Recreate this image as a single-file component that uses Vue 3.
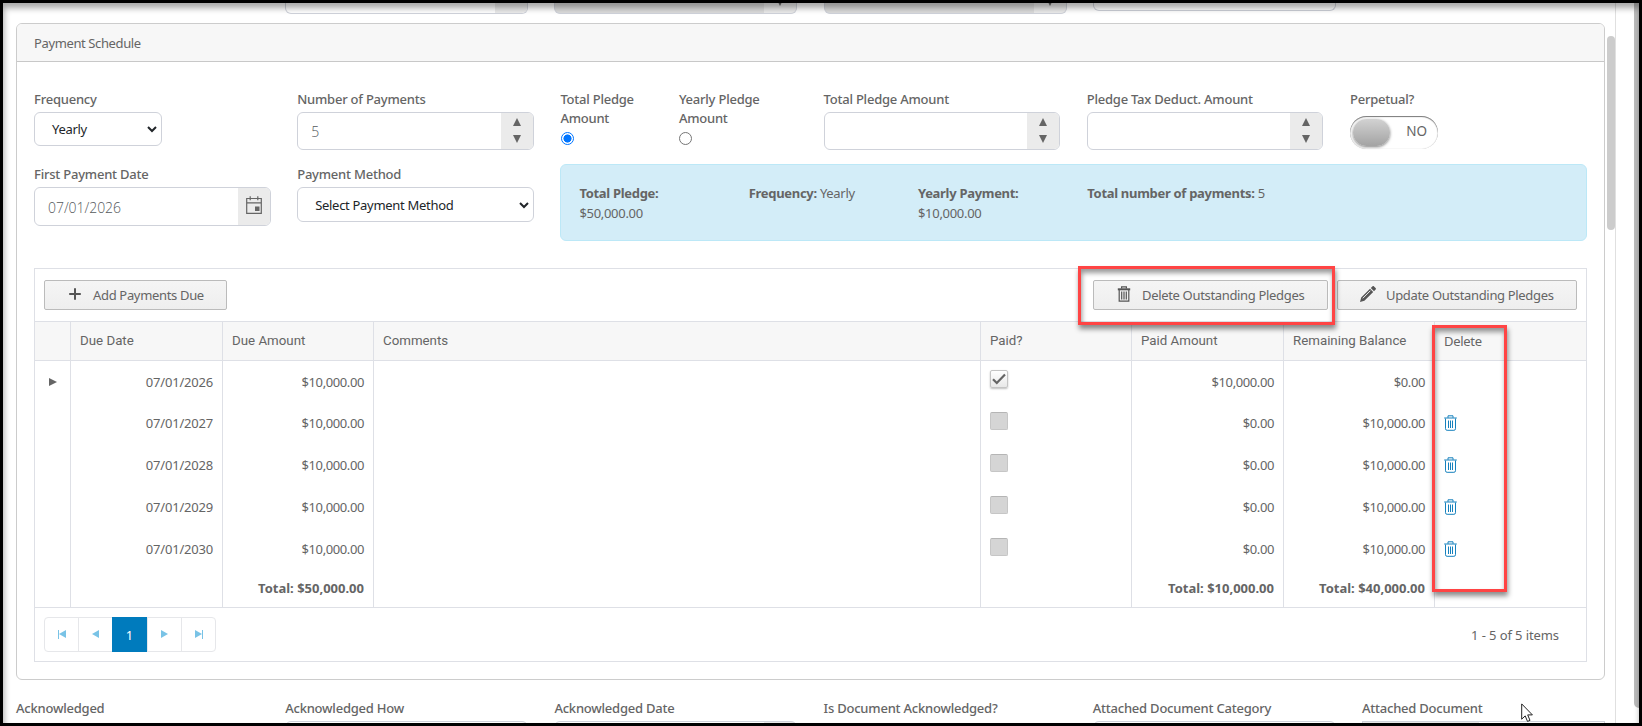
<template>
    <div class="screen">
        <div class="page">
            <div class="field-strip top-strip">
                <div class="strip-col"></div>
                <div class="strip-col"><div class="cut-input"><span class="cut-button"></span></div></div>
                <div class="strip-col"><div class="cut-input disabled"><span class="cut-button"><i class="arrow down"></i></span></div></div>
                <div class="strip-col"><div class="cut-input disabled"><span class="cut-button"><i class="arrow down"></i></span></div></div>
                <div class="strip-col"><div class="cut-input short"></div></div>
                <div class="strip-col"></div>
            </div>

            <section class="card">
                <header class="card-header">Payment Schedule</header>
                <div class="card-body">
                    <div class="form-grid">
                        <div class="field">
                            <label>Frequency</label>
                            <div class="select small">
                                <span>{{ frequency }}</span>
                                <svg class="chevron" viewBox="0 0 10 7"><path d="M1 1l4 4 4-4" /></svg>
                            </div>
                        </div>
                        <div class="field">
                            <label>Number of Payments</label>
                            <div class="numeric">
                                <span class="value">{{ payments.length }}</span>
                                <span class="spinner"><i class="arrow up"></i><i class="arrow down"></i></span>
                            </div>
                        </div>
                        <div class="field radios">
                            <div class="radio-item total">
                                <label>Total Pledge Amount</label>
                                <span class="radio checked"></span>
                            </div>
                            <div class="radio-item">
                                <label>Yearly Pledge Amount</label>
                                <span class="radio"></span>
                            </div>
                        </div>
                        <div class="field">
                            <label>Total Pledge Amount</label>
                            <div class="numeric amount">
                                <span class="value"></span>
                                <span class="spinner"><i class="arrow up"></i><i class="arrow down"></i></span>
                            </div>
                        </div>
                        <div class="field">
                            <label>Pledge Tax Deduct. Amount</label>
                            <div class="numeric amount">
                                <span class="value"></span>
                                <span class="spinner"><i class="arrow up"></i><i class="arrow down"></i></span>
                            </div>
                        </div>
                        <div class="field">
                            <label>Perpetual?</label>
                            <div class="switch"><span class="knob"></span><span class="switch-text">NO</span></div>
                        </div>

                        <div class="field">
                            <label>First Payment Date</label>
                            <div class="numeric date">
                                <span class="value">07/01/2026</span>
                                <span class="spinner">
                                    <svg class="calendar" viewBox="0 0 16 18">
                                        <path d="M.7 2.5h14.6v14.8H.7zM.7 6.8h14.6M4.2.3v4M11.8.3v4" />
                                        <rect x="9" y="10.5" width="4.5" height="4.5" />
                                    </svg>
                                </span>
                            </div>
                        </div>
                        <div class="field">
                            <label>Payment Method</label>
                            <div class="select">
                                <span>Select Payment Method</span>
                                <svg class="chevron" viewBox="0 0 10 7"><path d="M1 1l4 4 4-4" /></svg>
                            </div>
                        </div>
                        <div class="summary">
                            <div v-for="item in summary" :key="item.label" :class="{ wide: item.wide }">
                                <b>{{ item.label }}</b> {{ item.value }}
                            </div>
                        </div>
                    </div>

                    <div class="grid">
                        <div class="toolbar">
                            <button class="btn add">
                                <svg viewBox="0 0 16 16"><path d="M8 2.2v11.6M2.2 8h11.6" stroke-width="2" /></svg>
                                <span>Add Payments Due</span>
                            </button>
                            <button class="btn delete">
                                <svg viewBox="0 0 16 16">
                                    <path d="M1.8 3.3h12.4" stroke-width="2" />
                                    <path d="M5.6 2.4V.8h4.8v1.6M3.2 4v11.2h9.6V4M5.7 5.5v8M8 5.5v8M10.3 5.5v8" stroke-width="1.2" />
                                </svg>
                                <span>Delete Outstanding Pledges</span>
                            </button>
                            <button class="btn update">
                                <svg viewBox="0 0 16 16">
                                    <path class="solid" d="M0 16l1.2-4.4L10 2.8l3.2 3.2-8.8 8.8zM10.8 2L12.4.4c.5-.5 1.1-.5 1.6 0L15.6 2c.5.5.5 1.1 0 1.6L14 5.2z" />
                                    <path class="light" d="M2.8 12.3L10.4 4.7" />
                                </svg>
                                <span>Update Outstanding Pledges</span>
                            </button>
                        </div>
                        <table>
                            <colgroup>
                                <col class="c-expand"><col class="c-date"><col class="c-std"><col>
                                <col class="c-std"><col class="c-date"><col class="c-std"><col class="c-last">
                            </colgroup>
                            <thead>
                                <tr>
                                    <th></th>
                                    <th v-for="column in columns" :key="column" :class="{ lower: column === 'Delete' }">{{ column }}</th>
                                </tr>
                            </thead>
                            <tbody>
                                <tr v-for="payment in payments" :key="payment.date">
                                    <td class="expand"><i v-if="payment.paid" class="arrow right"></i></td>
                                    <td class="num date-cell">{{ payment.date }}</td>
                                    <td class="num">{{ payment.amount }}</td>
                                    <td></td>
                                    <td>
                                        <span class="check" :class="{ on: payment.paid }">
                                            <svg v-if="payment.paid" viewBox="0 0 14 14"><path d="M1 7.2L4.8 11 13 2.5" /></svg>
                                        </span>
                                    </td>
                                    <td class="num">{{ payment.paidAmount }}</td>
                                    <td class="num">{{ payment.balance }}</td>
                                    <td>
                                        <svg v-if="!payment.paid" class="trash" viewBox="0 0 13 16">
                                            <path d="M.2 3h12.6M4 2.8V.8h5v2M1.5 3.5v10.2q0 1.6 1.6 1.6h6.800q1.6 0 1.6-1.6V3.5M4.500 5.500v7.500M6.500 5.500v7.500M8.500 5.500v7.500" />
                                        </svg>
                                    </td>
                                </tr>
                            </tbody>
                            <tfoot>
                                <tr>
                                    <td></td>
                                    <td></td>
                                    <td class="num">Total: $50,000.00</td>
                                    <td></td>
                                    <td></td>
                                    <td class="num">Total: $10,000.00</td>
                                    <td class="num">Total: $40,000.00</td>
                                    <td></td>
                                </tr>
                            </tfoot>
                        </table>
                        <div class="pager">
                            <div class="pages">
                                <span class="page-link narrow"><i class="bar"></i><i class="arrow left"></i></span>
                                <span class="page-link"><i class="arrow left"></i></span>
                                <span class="page-link active">1</span>
                                <span class="page-link"><i class="arrow right"></i></span>
                                <span class="page-link"><i class="arrow right"></i><i class="bar"></i></span>
                            </div>
                            <span class="pager-info">1 - 5 of 5 items</span>
                        </div>
                    </div>
                </div>
            </section>

            <div class="field-strip bottom-strip">
                <div v-for="(name, index) in bottomFields" :key="name" class="strip-col">
                    <label>{{ name }}</label>
                    <div v-if="index !== 0 && index !== 3" class="cut-top" :class="{ picker: index === 2, file: index === 5 }"></div>
                </div>
            </div>
        </div>

        <div class="inner-thumb"></div>
        <div class="outer-thumb"></div>
        <div class="marker marker-button"></div>
        <div class="marker marker-column"></div>
        <svg class="cursor" viewBox="0 0 12 20">
            <path d="M.7.9v15.3l3.500-3.300 2.300 5.500 2.500-1-2.300-5.500h4.700z" />
        </svg>
        <div class="frame"></div>
    </div>
</template>

<script setup>
import { ref } from 'vue';

const frequency = ref('Yearly');

const summary = [
    { label: 'Total Pledge:', value: '$50,000.00' },
    { label: 'Frequency:', value: 'Yearly' },
    { label: 'Yearly Payment:', value: '$10,000.00' },
    { label: 'Total number of payments:', value: '5', wide: true }
];

const columns = ['Due Date', 'Due Amount', 'Comments', 'Paid?', 'Paid Amount', 'Remaining Balance', 'Delete'];

const payments = ref([
    { date: '07/01/2026', amount: '$10,000.00', paid: true, paidAmount: '$10,000.00', balance: '$0.00' },
    { date: '07/01/2027', amount: '$10,000.00', paid: false, paidAmount: '$0.00', balance: '$10,000.00' },
    { date: '07/01/2028', amount: '$10,000.00', paid: false, paidAmount: '$0.00', balance: '$10,000.00' },
    { date: '07/01/2029', amount: '$10,000.00', paid: false, paidAmount: '$0.00', balance: '$10,000.00' },
    { date: '07/01/2030', amount: '$10,000.00', paid: false, paidAmount: '$0.00', balance: '$10,000.00' }
]);

const bottomFields = [
    'Acknowledged',
    'Acknowledged How',
    'Acknowledged Date',
    'Is Document Acknowledged?',
    'Attached Document Category',
    'Attached Document'
];
</script>

<style>
body {
    overflow: hidden;
}
</style>

<style scoped>
* {
    box-sizing: border-box;
}

.screen {
    position: relative;
    width: 1642px;
    height: 726px;
    overflow: hidden;
    background: #fff;
    color: #656565;
    font-family: "Noto Sans", "Open Sans", sans-serif;
    font-size: 13px;
    line-height: 19px;
}

.page {
    width: 1616px;
    height: 726px;
    padding-left: 16px;
    border-right: 1px solid #e0e0e0;
}

label {
    display: block;
    font-weight: 500;
    letter-spacing: -0.22px;
    white-space: nowrap;
}

.field-strip {
    display: grid;
    grid-template-columns: repeat(6, 269.2px);
}

.top-strip {
    height: 23px;
}

.cut-input {
    display: flex;
    justify-content: flex-end;
    width: 243px;
    height: 14px;
    border: 1px solid #cfd2da;
    border-top: 0;
    border-radius: 0 0 6px 6px;
    overflow: hidden;
}

.cut-input.disabled {
    background: #dcdcdc;
}

.cut-input.short {
    height: 11px;
}

.cut-button {
    display: flex;
    justify-content: center;
    width: 32px;
    background: #ebebeb;
}

.cut-button .arrow {
    margin-top: -2px;
}

.arrow {
    display: block;
    width: 0;
    height: 0;
    border: 4.5px solid transparent;
}

.arrow.up {
    border-top: 0;
    border-bottom: 8px solid #656565;
}

.arrow.down {
    border-bottom: 0;
    border-top: 8px solid #656565;
}

.arrow.left {
    border-left: 0;
    border-right: 8px solid #79c3e6;
}

.arrow.right {
    border-right: 0;
    border-left: 8px solid #656565;
}

.card {
    width: 1589px;
    height: 657px;
    border: 1px solid #ccc;
    border-radius: 6px;
    overflow: hidden;
}

.card-header {
    height: 38px;
    padding: 10px 17px;
    background: #f7f7f7;
    border-bottom: 1px solid #c8c8c8;
    letter-spacing: -0.38px;
}

.card-body {
    padding: 28px 17px 0;
}

.form-grid {
    display: grid;
    grid-template-columns: repeat(5, 263.2px) 1fr;
    grid-template-rows: 75px 78px;
}

.field {
    width: 237px;
}

.field label {
    margin-bottom: 3px;
}

.select,
.numeric {
    display: flex;
    align-items: center;
    justify-content: space-between;
    border: 1px solid #cfd2da;
    border-radius: 6px;
    background: #fff;
    overflow: hidden;
}

.select {
    height: 35px;
    padding: 1px 4px 0 17px;
    color: #212529;
    letter-spacing: -0.3px;
}

.select.small {
    width: 128px;
    height: 34px;
}

.chevron {
    width: 10px;
    height: 7px;
    fill: none;
    stroke: #212529;
    stroke-width: 2;
}

.numeric {
    height: 38px;
    color: #55595c;
    font-family: "Open Sans", "Noto Sans", sans-serif;
    font-size: 14px;
    font-weight: 300;
}

.numeric.amount {
    width: 236px;
}

.numeric.date {
    height: 39px;
}

.numeric .value {
    padding: 1px 0 0 13px;
    letter-spacing: -0.05px;
}

.spinner {
    display: flex;
    flex-direction: column;
    align-items: center;
    justify-content: center;
    gap: 9px;
    width: 32px;
    height: 100%;
    padding-bottom: 1px;
    background: #ebebeb;
}

.calendar {
    width: 16px;
    height: 18px;
    margin-top: -2px;
    fill: none;
    stroke: #656565;
    stroke-width: 1.2;
}

.calendar rect {
    fill: #656565;
    stroke: none;
}

.radios {
    display: flex;
}

.radio-item {
    width: 90px;
}

.radio-item.total {
    width: 118.5px;
    padding-right: 30px;
}

.radio-item label {
    margin-bottom: 4px;
    white-space: normal;
}

.radio {
    display: block;
    width: 13px;
    height: 13px;
    margin-left: 0.5px;
    border: 1px solid #767676;
    border-radius: 50%;
}

.radio.checked {
    border-color: #0075ff;
    background: radial-gradient(circle, #0075ff 3.8px, #fff 4.3px);
}

.switch {
    display: flex;
    align-items: center;
    justify-content: space-between;
    width: 88px;
    height: 33px;
    margin-top: 7px;
    padding: 0 11px 0 3px;
    border-radius: 17px;
    background: #fff;
    box-shadow: inset 0 1px 1px #777, inset 0 0 1px #bbb;
    font-size: 13.5px;
}

.switch-text {
    margin-top: -3px;
}

.knob {
    width: 37px;
    height: 27px;
    margin-top: -1px;
    border-radius: 14px;
    background: linear-gradient(#d2d2d2, #a3a3a3);
    box-shadow: 0 1px 3px rgba(0, 0, 0, 0.5);
}

.summary {
    grid-column: 3 / -1;
    display: grid;
    grid-template-columns: repeat(3, 169.3px) 1fr;
    height: 77px;
    margin-top: -1px;
    padding: 18px 18px 0;
    border: 1px solid #bce8f7;
    border-radius: 6px;
    background: #d3edf8;
    line-height: 20px;
    letter-spacing: -0.3px;
}

.summary div {
    width: 115px;
}

.summary .wide {
    width: auto;
}

.grid {
    height: 394px;
    margin-top: 25px;
    border: 1px solid #dee0e6;
}

.toolbar {
    display: flex;
    gap: 9px;
    height: 52px;
    padding: 11px 9px;
}

.btn {
    display: flex;
    align-items: center;
    gap: 10px;
    height: 30px;
    padding: 0 0 0 22px;
    border: 1px solid #bbb;
    border-radius: 2px;
    background: linear-gradient(#f5f5f5, #eee);
    color: #656565;
    font: inherit;
    letter-spacing: -0.33px;
    white-space: nowrap;
}

.btn svg {
    width: 16px;
    height: 16px;
    margin-top: -2px;
    fill: none;
    stroke: #555;
}

.btn .solid {
    fill: #555;
    stroke: none;
}

.btn .light {
    stroke: #eee;
    stroke-width: 1;
}

.btn.add {
    width: 183px;
    margin-right: auto;
}

.btn.delete {
    width: 235px;
}

.btn.update {
    width: 240px;
}

table {
    width: 100%;
    border-collapse: separate;
    border-spacing: 0;
    table-layout: fixed;
}

.c-expand {
    width: 35px;
}

.c-date {
    width: 152px;
}

.c-std {
    width: 151px;
}

.c-last {
    width: 152px;
}

th,
td {
    padding: 0 9px;
    border-left: 1px solid #dee0e6;
    text-align: left;
}

th:first-child,
td:first-child {
    border-left: 0;
}

th {
    height: 40px;
    padding-bottom: 2px;
    border-top: 1px solid #dee0e6;
    border-bottom: 1px solid #dee0e6;
    background: #f7f7f7;
    font-family: Roboto, "Liberation Sans", sans-serif;
    font-size: 13.3px;
    font-weight: 400;
}

th.lower {
    padding-top: 1px;
    padding-bottom: 0;
    font-family: "Noto Sans", sans-serif;
    font-size: 13px;
    letter-spacing: -0.3px;
}

tbody td {
    height: 42px;
    padding-top: 1px;
    letter-spacing: -0.4px;
}

tbody tr:first-child td {
    height: 41px;
    padding-top: 2px;
}

tbody td.date-cell {
    letter-spacing: -0.2px;
}

td.num {
    text-align: right;
}

tbody tr:first-child td.expand {
    padding-top: 0;
    padding-left: 14px;
}

tfoot td {
    height: 37px;
    font-weight: 700;
}

.check {
    display: block;
    width: 18px;
    height: 18px;
    margin-top: -5px;
    border: 1px solid #c6c6c6;
    border-top-color: #b5b5b5;
    border-radius: 2px;
    background: #d5d5d5;
}

.check.on {
    margin-top: -7px;
    border-color: #c4c4c4;
    background: linear-gradient(#fff, #e8e8e8);
    box-shadow: 0 1px 2px rgba(0, 0, 0, 0.25);
}

.check svg {
    display: block;
    width: 14px;
    height: 14px;
    margin: 1px;
    fill: none;
    stroke: #656565;
    stroke-width: 2.2;
}

.trash {
    display: block;
    width: 13px;
    height: 16px;
    margin-top: -2px;
    fill: none;
    stroke: #1681bd;
    stroke-width: 1;
}

.pager {
    display: flex;
    align-items: center;
    justify-content: space-between;
    height: 54px;
    padding: 0 27px 0 9px;
    border-top: 1px solid #dee0e6;
}

.pager-info {
    padding-top: 1px;
    letter-spacing: -0.1px;
}

.pages {
    display: flex;
    height: 35px;
    border: 1px solid #e6e7ea;
    border-radius: 4px;
}

.page-link {
    display: flex;
    align-items: center;
    justify-content: center;
    width: 34px;
    height: 33px;
    padding-bottom: 1px;
    border-left: 1px solid #e6e7ea;
}

.page-link.narrow {
    width: 33px;
}

.page-link:first-child {
    border-left: 0;
}

.page-link.active {
    width: 35px;
    height: 35px;
    margin: -1px 0;
    padding: 2px 0 0;
    border: 0;
    background: #007bbd;
    color: #fff;
}

.page-link .arrow {
    border-right-width: 7px;
}

.page-link .arrow.right {
    border-right-width: 0;
    border-left-width: 7px;
    border-left-color: #79c3e6;
}

.bar {
    width: 1px;
    height: 9px;
    background: #79c3e6;
}

.bottom-strip {
    margin-top: 19px;
}

.bottom-strip label {
    margin-bottom: 3px;
}

.cut-top {
    width: 243px;
    height: 8px;
    border: 1px solid #cfd2da;
    border-radius: 6px 6px 0 0;
}

.cut-top.picker {
    background: linear-gradient(90deg, #fff 209px, #ebebeb 209px);
}

.cut-top.file {
    border-radius: 0;
    background: linear-gradient(90deg, #e8e8e8 116px, #fff 116px);
}

.inner-thumb {
    position: absolute;
    left: 1607px;
    top: 36px;
    width: 8px;
    height: 194px;
    border-radius: 4px;
    background: #ccc;
}

.outer-thumb {
    position: absolute;
    left: 1634px;
    top: -10px;
    width: 10px;
    height: 718px;
    border-radius: 5px;
    background: #bcbcbc;
}

.marker {
    position: absolute;
    border: 3px solid #ff4444;
    box-shadow: 1px 4px 5px rgba(0, 0, 0, 0.45), inset 1px 4px 5px rgba(0, 0, 0, 0.4);
}

.marker-button {
    left: 1078px;
    top: 266px;
    width: 257px;
    height: 59px;
}

.marker-column {
    left: 1432px;
    top: 325px;
    width: 75px;
    height: 267px;
}

.cursor {
    position: absolute;
    left: 1521px;
    top: 703px;
    width: 12px;
    height: 20px;
    fill: #fff;
    stroke: #222;
    stroke-width: 1;
}

.frame {
    position: absolute;
    inset: 0;
    border: 3px solid #000;
    box-shadow: inset 1px 5px 6px rgba(0, 0, 0, 0.35);
}
</style>
